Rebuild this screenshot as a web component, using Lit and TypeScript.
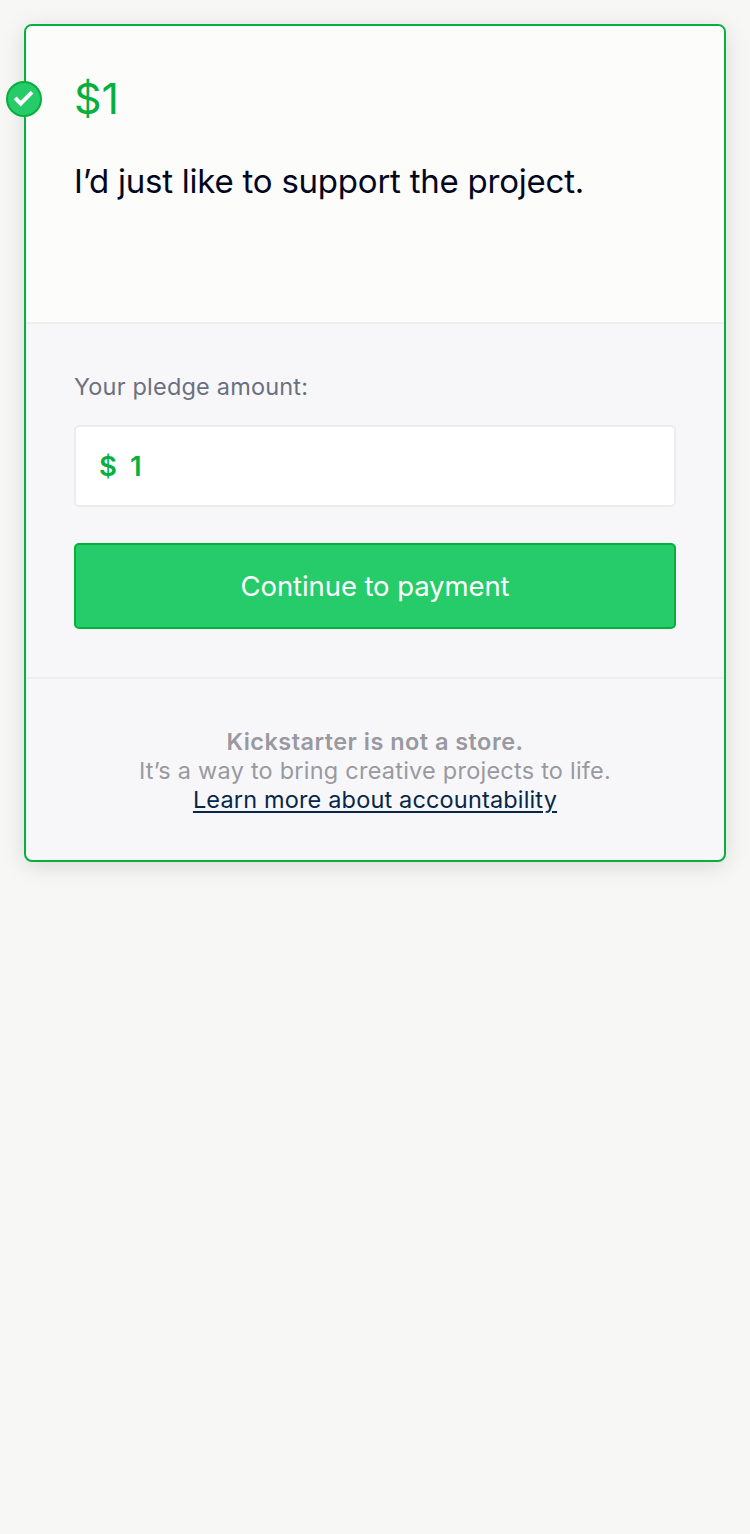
import { LitElement, html, css } from "lit";
import { customElement, state } from "lit/decorators.js";

@customElement("app-root")
export class AppRoot extends LitElement {
  @state() private amount = 1;

  static styles = css`
    :host {
      display: block;
      box-sizing: border-box;
      min-height: 100vh;
      padding: 24px;
      background: #f7f7f5;
      font-family: Inter, "Liberation Sans", sans-serif;
      font-size: 24px;
      color: #020621;
    }
    .card {
      position: relative;
      box-sizing: border-box;
      height: 838px;
      display: flex;
      flex-direction: column;
      border: 2px solid #05b03f;
      border-radius: 8px;
      background: #f7f7fa;
      box-shadow: 0 4px 22px rgba(0, 0, 0, 0.13);
    }
    .badge {
      position: absolute;
      left: -20px;
      top: 55px;
      width: 36px;
      height: 36px;
      display: block;
    }
    .reward {
      box-sizing: border-box;
      height: 298px;
      padding: 45px 48px 0;
      border-bottom: 2px solid #eeeeef;
      border-radius: 6px 6px 0 0;
      background: #fcfcfa;
    }
    .price {
      font-size: 43px;
      line-height: 54px;
      color: #05b03f;
    }
    .title {
      margin-top: 34px;
      font-size: 33px;
      line-height: 44px;
      letter-spacing: -0.23px;
      white-space: nowrap;
    }
    .pledge {
      box-sizing: border-box;
      height: 355px;
      padding: 48px 48px 0;
      border-bottom: 2px solid #eeeeef;
    }
    .label {
      line-height: 30px;
      font-size: 23.5px;
      letter-spacing: 0.19px;
      color: #6b7080;
    }
    .field {
      display: flex;
      align-items: center;
      gap: 13px;
      box-sizing: border-box;
      height: 82px;
      margin-top: 23px;
      padding-left: 23px;
      border: 2px solid #ececee;
      border-radius: 5px;
      background: #fff;
      color: #05b03f;
      font-size: 27.5px;
      font-weight: 600;
    }
    .submit {
      display: block;
      box-sizing: border-box;
      width: 100%;
      height: 86px;
      margin: 36px 0 0;
      padding: 0;
      border: 2px solid #05b03f;
      border-radius: 5px;
      background: #26cc69;
      color: #fff;
      font-family: inherit;
      font-size: 27.5px;
      letter-spacing: -0.09px;
    }
    .note {
      padding-top: 48px;
      display: flex;
      flex-direction: column;
      align-items: center;
      line-height: 29px;
      font-size: 23.5px;
      color: #99999f;
      white-space: nowrap;
    }
    .note strong {
      font-weight: 600;
      letter-spacing: 0.46px;
    }
    .note span {
      letter-spacing: 0.23px;
    }
    .note a {
      color: #06264a;
      letter-spacing: 0.16px;
      text-decoration: underline;
      text-decoration-thickness: 2px;
      text-underline-offset: 3px;
    }
  `;

  render() {
    return html`
      <main class="card">
        <svg class="badge" viewBox="0 0 36 36" aria-hidden="true">
          <circle cx="18" cy="18" r="17" fill="#26cc69" stroke="#05b03f" stroke-width="2" />
          <path d="M9.2 16.8L14.7 22.6L26 11.2" fill="none" stroke="#fff" stroke-width="4" />
        </svg>
        <section class="reward">
          <div class="price"><span>$${this.amount}</span></div>
          <div class="title"><span>I’d just like to support the project.</span></div>
        </section>
        <section class="pledge">
          <div class="label">Your pledge amount:</div>
          <div class="field"><span>$</span><span>${this.amount}</span></div>
          <button class="submit">Continue to payment</button>
        </section>
        <footer class="note">
          <strong>Kickstarter is not a store.</strong>
          <span>It’s a way to bring creative projects to life.</span>
          <a>Learn more about accountability</a>
        </footer>
      </main>
    `;
  }
}
